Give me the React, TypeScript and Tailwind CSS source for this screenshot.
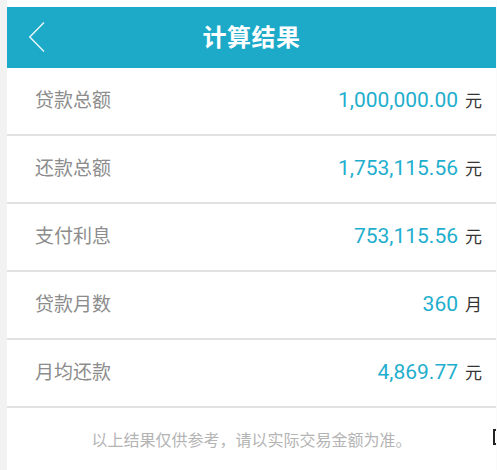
import React from 'react';

const rows = [
  { label: '贷款总额', value: '1,000,000.00', unit: '元' },
  { label: '还款总额', value: '1,753,115.56', unit: '元' },
  { label: '支付利息', value: '753,115.56', unit: '元' },
  { label: '贷款月数', value: '360', unit: '月' },
  { label: '月均还款', value: '4,869.77', unit: '元' },
];

const font = { fontFamily: 'Roboto, "Noto Sans CJK SC", sans-serif' };

export default function App() {
  return (
    <div className="flex w-[497px] h-[470px] bg-white overflow-hidden" style={font}>
      <div className="w-[7px] shrink-0 bg-[#f2f2f2]" />
      <div className="flex flex-col w-[489px] pt-[7px] bg-white">
        {/* Header */}
        <header className="relative flex items-center justify-center h-[61px] bg-[#1caac8]">
          <svg className="absolute left-[22px] top-[15px]" width="24" height="32" viewBox="0 0 24 32" fill="none">
            <path d="M15 0.5 L0.8 15 L15 29.5" stroke="#e8f7fb" strokeWidth="1.4" />
          </svg>
          <h1 className="text-[24px] font-bold text-white tracking-[0.5px]">计算结果</h1>
        </header>

        {/* Result rows */}
        <div className="flex flex-col">
          {rows.map((r) => (
            <div
              key={r.label}
              className="flex items-center justify-between h-[68px] pl-[28px] pr-[14px] border-b-2 border-[#e2e2e2]"
            >
              <span className="text-[19px] text-[#8c8c8c]">{r.label}</span>
              <span className="flex items-baseline gap-[7px]">
                <span className="text-[21px] text-[#1eaecd]">{r.value}</span>
                <span className="text-[17px] text-[#333]">{r.unit}</span>
              </span>
            </div>
          ))}
        </div>

        {/* Footer note */}
        <div className="relative flex justify-center pt-[21px]">
          <p className="text-[16px] text-[#b4b4b4]">以上结果仅供参考，请以实际交易金额为准。</p>
          <div className="absolute right-0 top-[21px] w-[3px] h-[16px] border-l-2 border-y-2 border-[#222]" />
        </div>
      </div>
      <div className="w-[1px] shrink-0 bg-[#fafafa]" />
    </div>
  );
}
